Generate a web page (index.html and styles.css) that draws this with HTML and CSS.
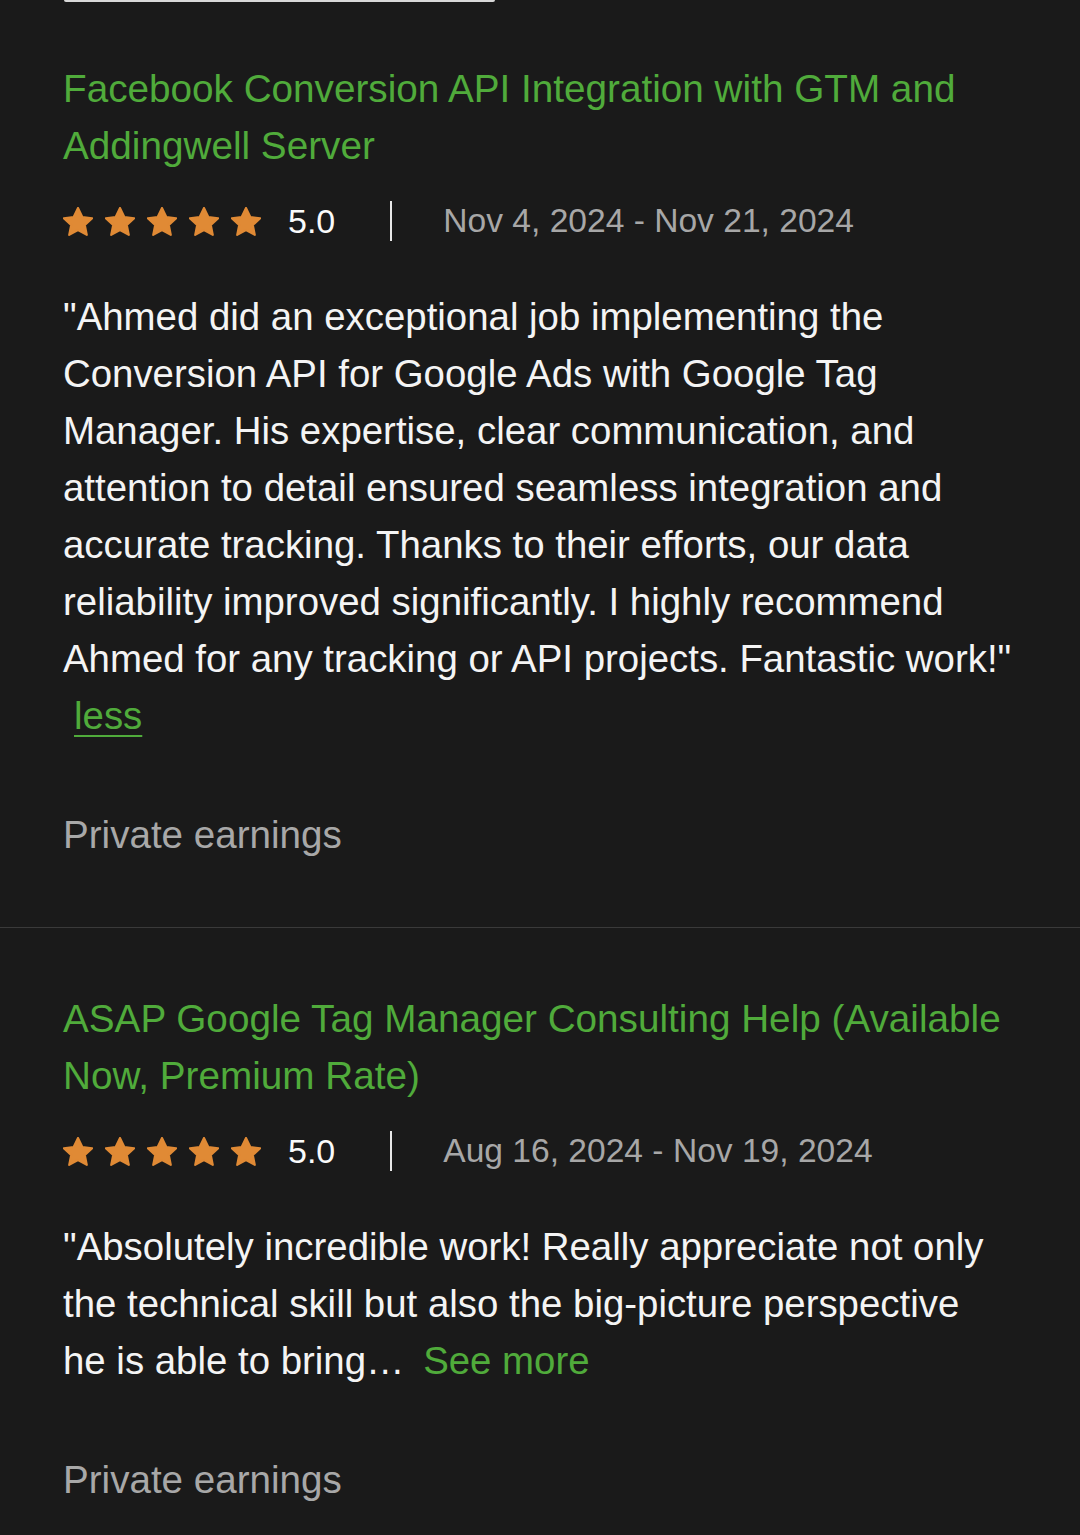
FILE: index.html
```html
<!DOCTYPE html>
<html lang="en">
<head>
  <meta charset="UTF-8" />
  <meta name="viewport" content="width=device-width, initial-scale=1.0" />
  <title>Work history</title>
  <link rel="stylesheet" href="styles.css">
</head>
<body>
  <div class="top-edge"></div>

  <div class="job">
    <h3 class="job-title">Facebook Conversion API Integration with GTM and Addingwell Server</h3>
    <div class="rating-row">
      <div class="stars">
        <svg class="star" viewBox="2 1.6 20 19.4"><path d="M12 2.2l2.9 6.1 6.6.8-4.9 4.6 1.3 6.6L12 17l-5.9 3.3 1.3-6.6-4.9-4.6 6.6-.8z"/></svg>
        <svg class="star" viewBox="2 1.6 20 19.4"><path d="M12 2.2l2.9 6.1 6.6.8-4.9 4.6 1.3 6.6L12 17l-5.9 3.3 1.3-6.6-4.9-4.6 6.6-.8z"/></svg>
        <svg class="star" viewBox="2 1.6 20 19.4"><path d="M12 2.2l2.9 6.1 6.6.8-4.9 4.6 1.3 6.6L12 17l-5.9 3.3 1.3-6.6-4.9-4.6 6.6-.8z"/></svg>
        <svg class="star" viewBox="2 1.6 20 19.4"><path d="M12 2.2l2.9 6.1 6.6.8-4.9 4.6 1.3 6.6L12 17l-5.9 3.3 1.3-6.6-4.9-4.6 6.6-.8z"/></svg>
        <svg class="star" viewBox="2 1.6 20 19.4"><path d="M12 2.2l2.9 6.1 6.6.8-4.9 4.6 1.3 6.6L12 17l-5.9 3.3 1.3-6.6-4.9-4.6 6.6-.8z"/></svg>
      </div>
      <span class="score">5.0</span>
      <span class="sep"></span>
      <span class="dates">Nov 4, 2024 - Nov 21, 2024</span>
    </div>
    <p class="feedback">"Ahmed did an exceptional job implementing the Conversion API for Google Ads with Google Tag Manager. His expertise, clear communication, and attention to detail ensured seamless integration and accurate tracking. Thanks to their efforts, our data reliability improved significantly. I highly recommend Ahmed for any tracking or API projects. Fantastic work!" <a class="less-link" href="#">less</a></p>
    <div class="earnings">Private earnings</div>
  </div>

  <div class="job">
    <h3 class="job-title">ASAP Google Tag Manager Consulting Help (Available Now, Premium Rate)</h3>
    <div class="rating-row">
      <div class="stars">
        <svg class="star" viewBox="2 1.6 20 19.4"><path d="M12 2.2l2.9 6.1 6.6.8-4.9 4.6 1.3 6.6L12 17l-5.9 3.3 1.3-6.6-4.9-4.6 6.6-.8z"/></svg>
        <svg class="star" viewBox="2 1.6 20 19.4"><path d="M12 2.2l2.9 6.1 6.6.8-4.9 4.6 1.3 6.6L12 17l-5.9 3.3 1.3-6.6-4.9-4.6 6.6-.8z"/></svg>
        <svg class="star" viewBox="2 1.6 20 19.4"><path d="M12 2.2l2.9 6.1 6.6.8-4.9 4.6 1.3 6.6L12 17l-5.9 3.3 1.3-6.6-4.9-4.6 6.6-.8z"/></svg>
        <svg class="star" viewBox="2 1.6 20 19.4"><path d="M12 2.2l2.9 6.1 6.6.8-4.9 4.6 1.3 6.6L12 17l-5.9 3.3 1.3-6.6-4.9-4.6 6.6-.8z"/></svg>
        <svg class="star" viewBox="2 1.6 20 19.4"><path d="M12 2.2l2.9 6.1 6.6.8-4.9 4.6 1.3 6.6L12 17l-5.9 3.3 1.3-6.6-4.9-4.6 6.6-.8z"/></svg>
      </div>
      <span class="score">5.0</span>
      <span class="sep"></span>
      <span class="dates">Aug 16, 2024 - Nov 19, 2024</span>
    </div>
    <p class="feedback">"Absolutely incredible work! Really appreciate not only the technical skill but also the big-picture perspective he&nbsp;is able to bring… <a class="more-link" href="#">See more</a></p>
    <div class="earnings">Private earnings</div>
  </div>
</body>
</html>
```

FILE: styles.css
```css
* { margin:0; padding:0; box-sizing:border-box; }
body {
  font-family:"Liberation Sans", Arial, sans-serif;
  background:#1a1a1a; color:#f2f2f2;
  width:1080px; height:1535px; overflow:hidden;
}
.top-edge {
  margin:0 585px 0 64px; height:2px;
  background:#d8d8d8; border-radius:0 0 2px 2px;
}

.job { padding:58px 50px 64px 63px; border-bottom:1px solid #3a3a3a; }
.job + .job { padding-top:62px; border-bottom:none; }

.job-title {
  font-weight:normal; font-size:38.7px; line-height:57px;
  color:#50ab3b;
}

.rating-row {
  display:flex; align-items:center;
  height:40px; margin-top:27px;
}
.stars { display:flex; gap:12px; }
.star { width:30px; height:29px; fill:#e08a35; stroke:#e08a35; stroke-width:1.4; stroke-linejoin:round; }
.score { font-size:34px; margin-left:27px; color:#fafafa; }
.sep { width:2px; height:40px; background:#e8e8e8; margin:0 51px 0 55px; }
.dates { font-size:33.6px; color:#a7a7a7; }

.feedback {
  margin-top:47px; font-size:38.4px; line-height:57px;
  color:#f4f4f4;
}
.less-link {
  color:#50ab3b; margin-left:11px;
  text-decoration:underline; text-underline-offset:6px; text-decoration-thickness:2px;
}
.more-link { color:#50ab3b; text-decoration:none; margin-left:8px; }

.earnings {
  margin-top:62px; font-size:38.6px; line-height:57px;
  color:#a8a8a8;
}
```
